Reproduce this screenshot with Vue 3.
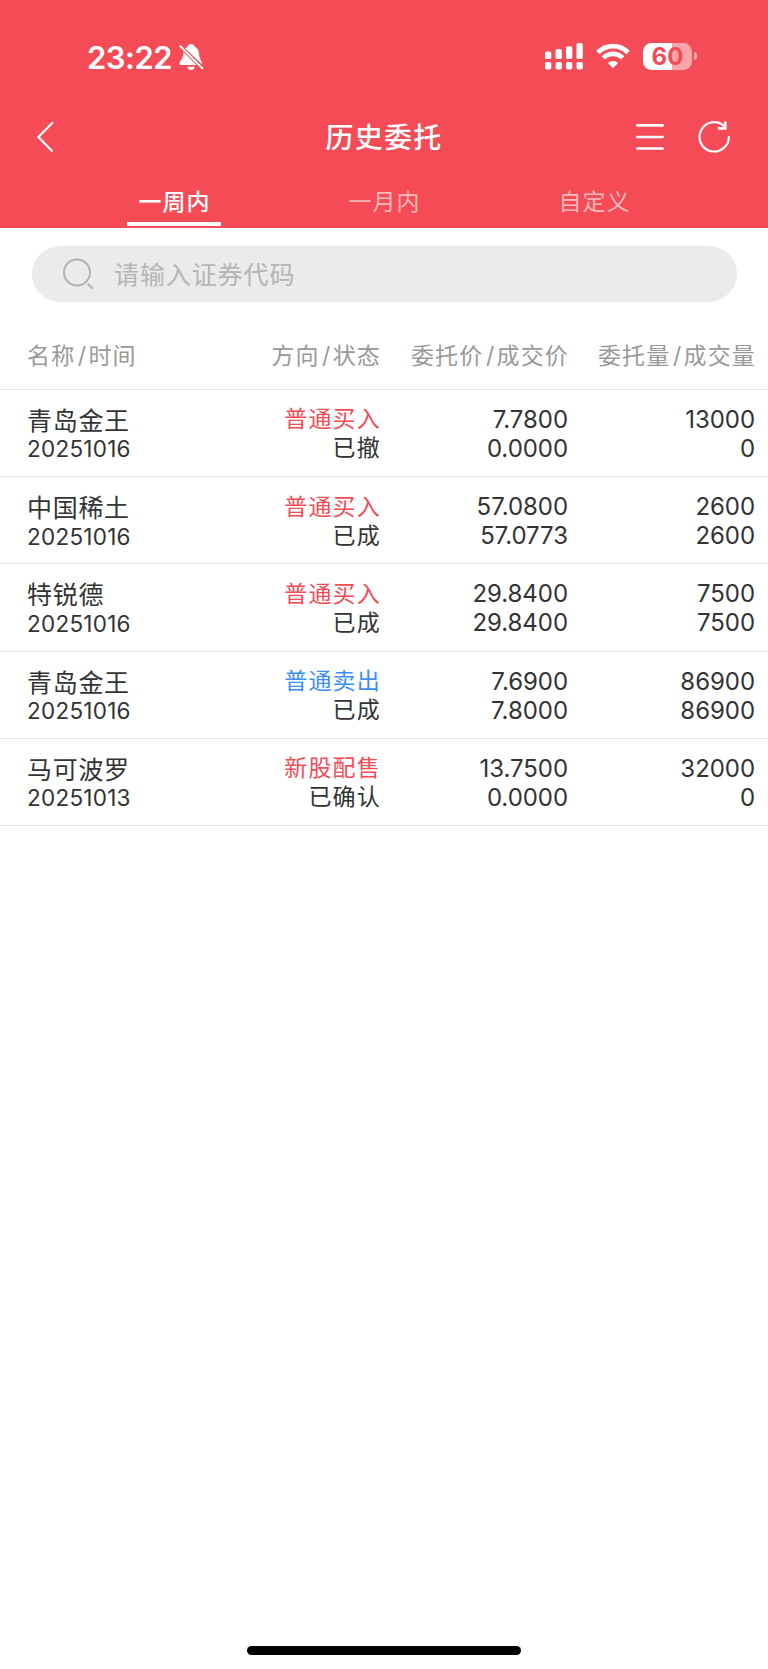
<script setup>
const tabs = ['一周内', '一月内', '自定义']
const columns = [
  ['名称', '时间'],
  ['方向', '状态'],
  ['委托价', '成交价'],
  ['委托量', '成交量'],
]
const orders = [
  { name: '青岛金王', date: '20251016', side: '普通买入', kind: 'buy', status: '已撤', price: '7.7800', deal: '0.0000', qty: '13000', filled: '0' },
  { name: '中国稀土', date: '20251016', side: '普通买入', kind: 'buy', status: '已成', price: '57.0800', deal: '57.0773', qty: '2600', filled: '2600' },
  { name: '特锐德', date: '20251016', side: '普通买入', kind: 'buy', status: '已成', price: '29.8400', deal: '29.8400', qty: '7500', filled: '7500' },
  { name: '青岛金王', date: '20251016', side: '普通卖出', kind: 'sell', status: '已成', price: '7.6900', deal: '7.8000', qty: '86900', filled: '86900' },
  { name: '马可波罗', date: '20251013', side: '新股配售', kind: 'buy', status: '已确认', price: '13.7500', deal: '0.0000', qty: '32000', filled: '0' },
]
</script>

<template>
  <div class="screen">
    <header class="top">
      <div class="statusbar">
        <span class="clock">23:22</span>
        <svg class="bell" width="26" height="28" viewBox="0 0 26 28">
          <path d="M7.300 5.400C8.300 4.700 9.100 4.300 9.500 3.500 10.100 1.900 11.300 1 13.100 1s3.100 1 3.700 2.700c2.700 1.300 4.100 3.700 4.300 7.100.3 6.300 2.900 6.600 3 10.800z" fill="#fff" />
          <path d="M5.500 9C5.200 13.500 4.400 15.600 2.500 17.800 1.300 19.300 1 21.900 3.200 21.900h15.300z" fill="#fff" />
          <path d="M9.300 23.700h7.600c-.4 2-1.900 3.200-3.800 3.200s-3.400-1.200-3.800-3.200z" fill="#fff" />
          <path d="M2.400 3.200 24.400 25.400" stroke="#fff" stroke-width="2" stroke-linecap="round" />
        </svg>
        <svg class="signal" width="38" height="28" viewBox="0 0 38 28" fill="#fff">
          <rect x="0" y="8.500" width="6.300" height="7.600" rx="1.900" />
          <rect x="10.500" y="6" width="6.300" height="10.100" rx="1.900" />
          <rect x="21" y="3.200" width="6.300" height="12.900" rx="1.900" />
          <rect x="31.500" y="0" width="6.300" height="16.100" rx="1.900" />
          <rect x="0" y="19" width="6.300" height="7.500" rx="1.900" />
          <rect x="10.500" y="19" width="6.300" height="7.500" rx="1.900" />
          <rect x="21" y="19" width="6.300" height="7.500" rx="1.900" />
          <rect x="31.500" y="19" width="6.300" height="7.500" rx="1.900" />
        </svg>
        <svg class="wifi" width="34" height="26" viewBox="0 0 34 26" fill="none" stroke="#fff" stroke-width="4.800">
          <path d="M1.900 9.500C10.200.9 23.800.9 32.100 9.500" />
          <path d="M7.200 14.900c5.400-5.400 14.200-5.400 19.600 0" stroke-width="4.600" />
          <path d="M17 25.200 11.900 20c2.900-2.700 7.300-2.700 10.200 0z" fill="#fff" stroke="none" />
        </svg>
        <div class="battery">
          <div class="cell">60</div>
          <span class="nub"></span>
        </div>
      </div>

      <div class="titlebar">
        <svg class="back" width="20" height="32" viewBox="0 0 20 32" fill="none" stroke="#fff" stroke-width="2.200">
          <path d="M17 1.200 2.400 16 16.500 30.500" />
        </svg>
        <h1 class="title">历史委托</h1>
        <div class="tools">
          <svg width="28" height="28" viewBox="0 0 28 28" stroke="#fff" stroke-width="2.700" stroke-linecap="round">
            <path d="M1.400 2.400h25.200M1.400 14h25.200M1.400 25.500h25.200" />
          </svg>
          <svg width="34" height="34" viewBox="0 0 34 34" fill="none" stroke="#fff" stroke-width="2.200">
            <path d="M31.900 16.300A14.700 14.700 0 1 1 27.300 6.200" />
            <path d="M28.300 1.500V8.400H20.800" stroke-width="2.600" />
          </svg>
        </div>
      </div>

      <nav class="tabs">
        <span v-for="(tab, i) in tabs" :key="tab" class="tab" :class="{ active: i === 0 }">{{ tab }}</span>
      </nav>
    </header>

    <div class="search">
      <svg width="32" height="32" viewBox="0 0 32 32" fill="none" stroke="#b2b2b2" stroke-width="2">
        <circle cx="15" cy="14.500" r="13" />
        <path d="M25.600 25.700 31 30.700" />
      </svg>
      <span class="placeholder">请输入证券代码</span>
    </div>

    <div class="grid head">
      <span v-for="c in columns" :key="c[0]">{{ c[0] }}<span class="slash">/</span>{{ c[1] }}</span>
    </div>
    <div v-for="(o, i) in orders" :key="i" class="grid row">
      <div class="who">
        <div class="name">{{ o.name }}</div>
        <div class="date">{{ o.date }}</div>
      </div>
      <div class="state">
        <div :class="o.kind">{{ o.side }}</div>
        <div>{{ o.status }}</div>
      </div>
      <div class="num">
        <div>{{ o.price }}</div>
        <div>{{ o.deal }}</div>
      </div>
      <div class="num">
        <div>{{ o.qty }}</div>
        <div>{{ o.filled }}</div>
      </div>
    </div>

    <div class="home"></div>
  </div>
</template>

<style>
body {
  background: #fff;
}
</style>

<style scoped>
.screen {
  width: 768px;
  height: 1669px;
  box-sizing: border-box;
  display: flex;
  flex-direction: column;
  background: #fff;
  color: #333;
  font-family: Inter, "Noto Sans CJK SC", sans-serif;
}
.top {
  height: 227.5px;
  flex: none;
  background: #f54b56;
  color: #fff;
}
.statusbar {
  height: 110px;
  box-sizing: border-box;
  padding: 43px 71px 0 87px;
  display: flex;
  align-items: flex-start;
}
.clock {
  font-size: 31px;
  line-height: 29px;
  font-weight: 600;
  letter-spacing: -0.500px;
}
.bell {
  margin-left: 6px;
}
.signal {
  margin-left: auto;
}
.wifi {
  margin-left: 13px;
}
.battery {
  margin-left: 13px;
  display: flex;
  align-items: center;
  gap: 2px;
}
.cell {
  width: 49.500px;
  height: 26.500px;
  box-sizing: border-box;
  padding-left: 0.500px;
  border-radius: 8.500px;
  background: linear-gradient(90deg, #fff 60%, #faa5aa 60%);
  color: #f54b56;
  font-size: 24px;
  line-height: 27px;
  font-weight: 700;
  text-align: center;
}
.nub {
  width: 3px;
  height: 8px;
  border-radius: 0 4px 4px 0;
  background: #faa5aa;
}
.titlebar {
  height: 54px;
  display: grid;
  grid-template-columns: 1fr auto 1fr;
  align-items: center;
  padding: 0 37px 0 36px;
}
.title {
  margin: 0;
  padding: 2px 0 0 1px;
  font-size: 28px;
  line-height: 52px;
  font-weight: 500;
  letter-spacing: 1.300px;
}
.tools {
  justify-self: end;
  display: flex;
  align-items: center;
  gap: 33px;
}
.tabs {
  height: 62px;
  display: flex;
  justify-content: center;
  gap: 116px;
}
.tab {
  width: 94px;
  box-sizing: border-box;
  padding-left: 1px;
  border-bottom: 4px solid transparent;
  font-size: 23px;
  line-height: 77px;
  height: 62px;
  letter-spacing: 1px;
  text-align: center;
  color: #fbb9bd;
}
.tab.active {
  color: #fff;
  font-weight: 500;
  border-bottom-color: #fff;
}
.search {
  margin: 18.800px 31.500px 0 32px;
  height: 55.500px;
  flex: none;
  box-sizing: border-box;
  border-radius: 28px;
  background: #ebebeb;
  padding-left: 30px;
  display: flex;
  align-items: center;
  gap: 20px;
  color: #b5b5b5;
  font-size: 25px;
  letter-spacing: 0.900px;
}
.placeholder {
  padding-bottom: 2px;
}
.grid {
  flex: none;
  display: grid;
  grid-template-columns: 178px 175px 188px 187px;
  padding: 0 13px 0 27px;
  box-sizing: border-box;
  border-bottom: 1px solid #e6e6e6;
  text-align: right;
}
.grid > :first-child {
  text-align: left;
}
.head {
  height: 88.200px;
  padding-top: 21.200px;
  line-height: 67px;
  font-size: 23px;
  letter-spacing: 1.150px;
  color: #999;
  white-space: nowrap;
}
.head > :not(:first-child) {
  margin-right: -1px;
}
.slash {
  margin: 0 1.200px 0 2.500px;
}
.row {
  height: 87.250px;
  padding-top: 15px;
  line-height: 29px;
}
.who {
  padding-top: 2px;
  line-height: 28.500px;
}
.name {
  font-size: 25px;
  letter-spacing: 0.700px;
}
.date {
  font-size: 22.500px;
  letter-spacing: 0.250px;
}
.state {
  padding-top: 0.500px;
  margin-right: -1px;
  font-size: 23px;
  letter-spacing: 1.200px;
}
.num {
  font-size: 24px;
  letter-spacing: -0.050px;
}
.buy {
  color: #f54b56;
}
.sell {
  color: #3d8ff5;
}
.home {
  flex: none;
  width: 274px;
  height: 9px;
  margin: auto auto 14px;
  border-radius: 5px;
  background: #000;
}
</style>
